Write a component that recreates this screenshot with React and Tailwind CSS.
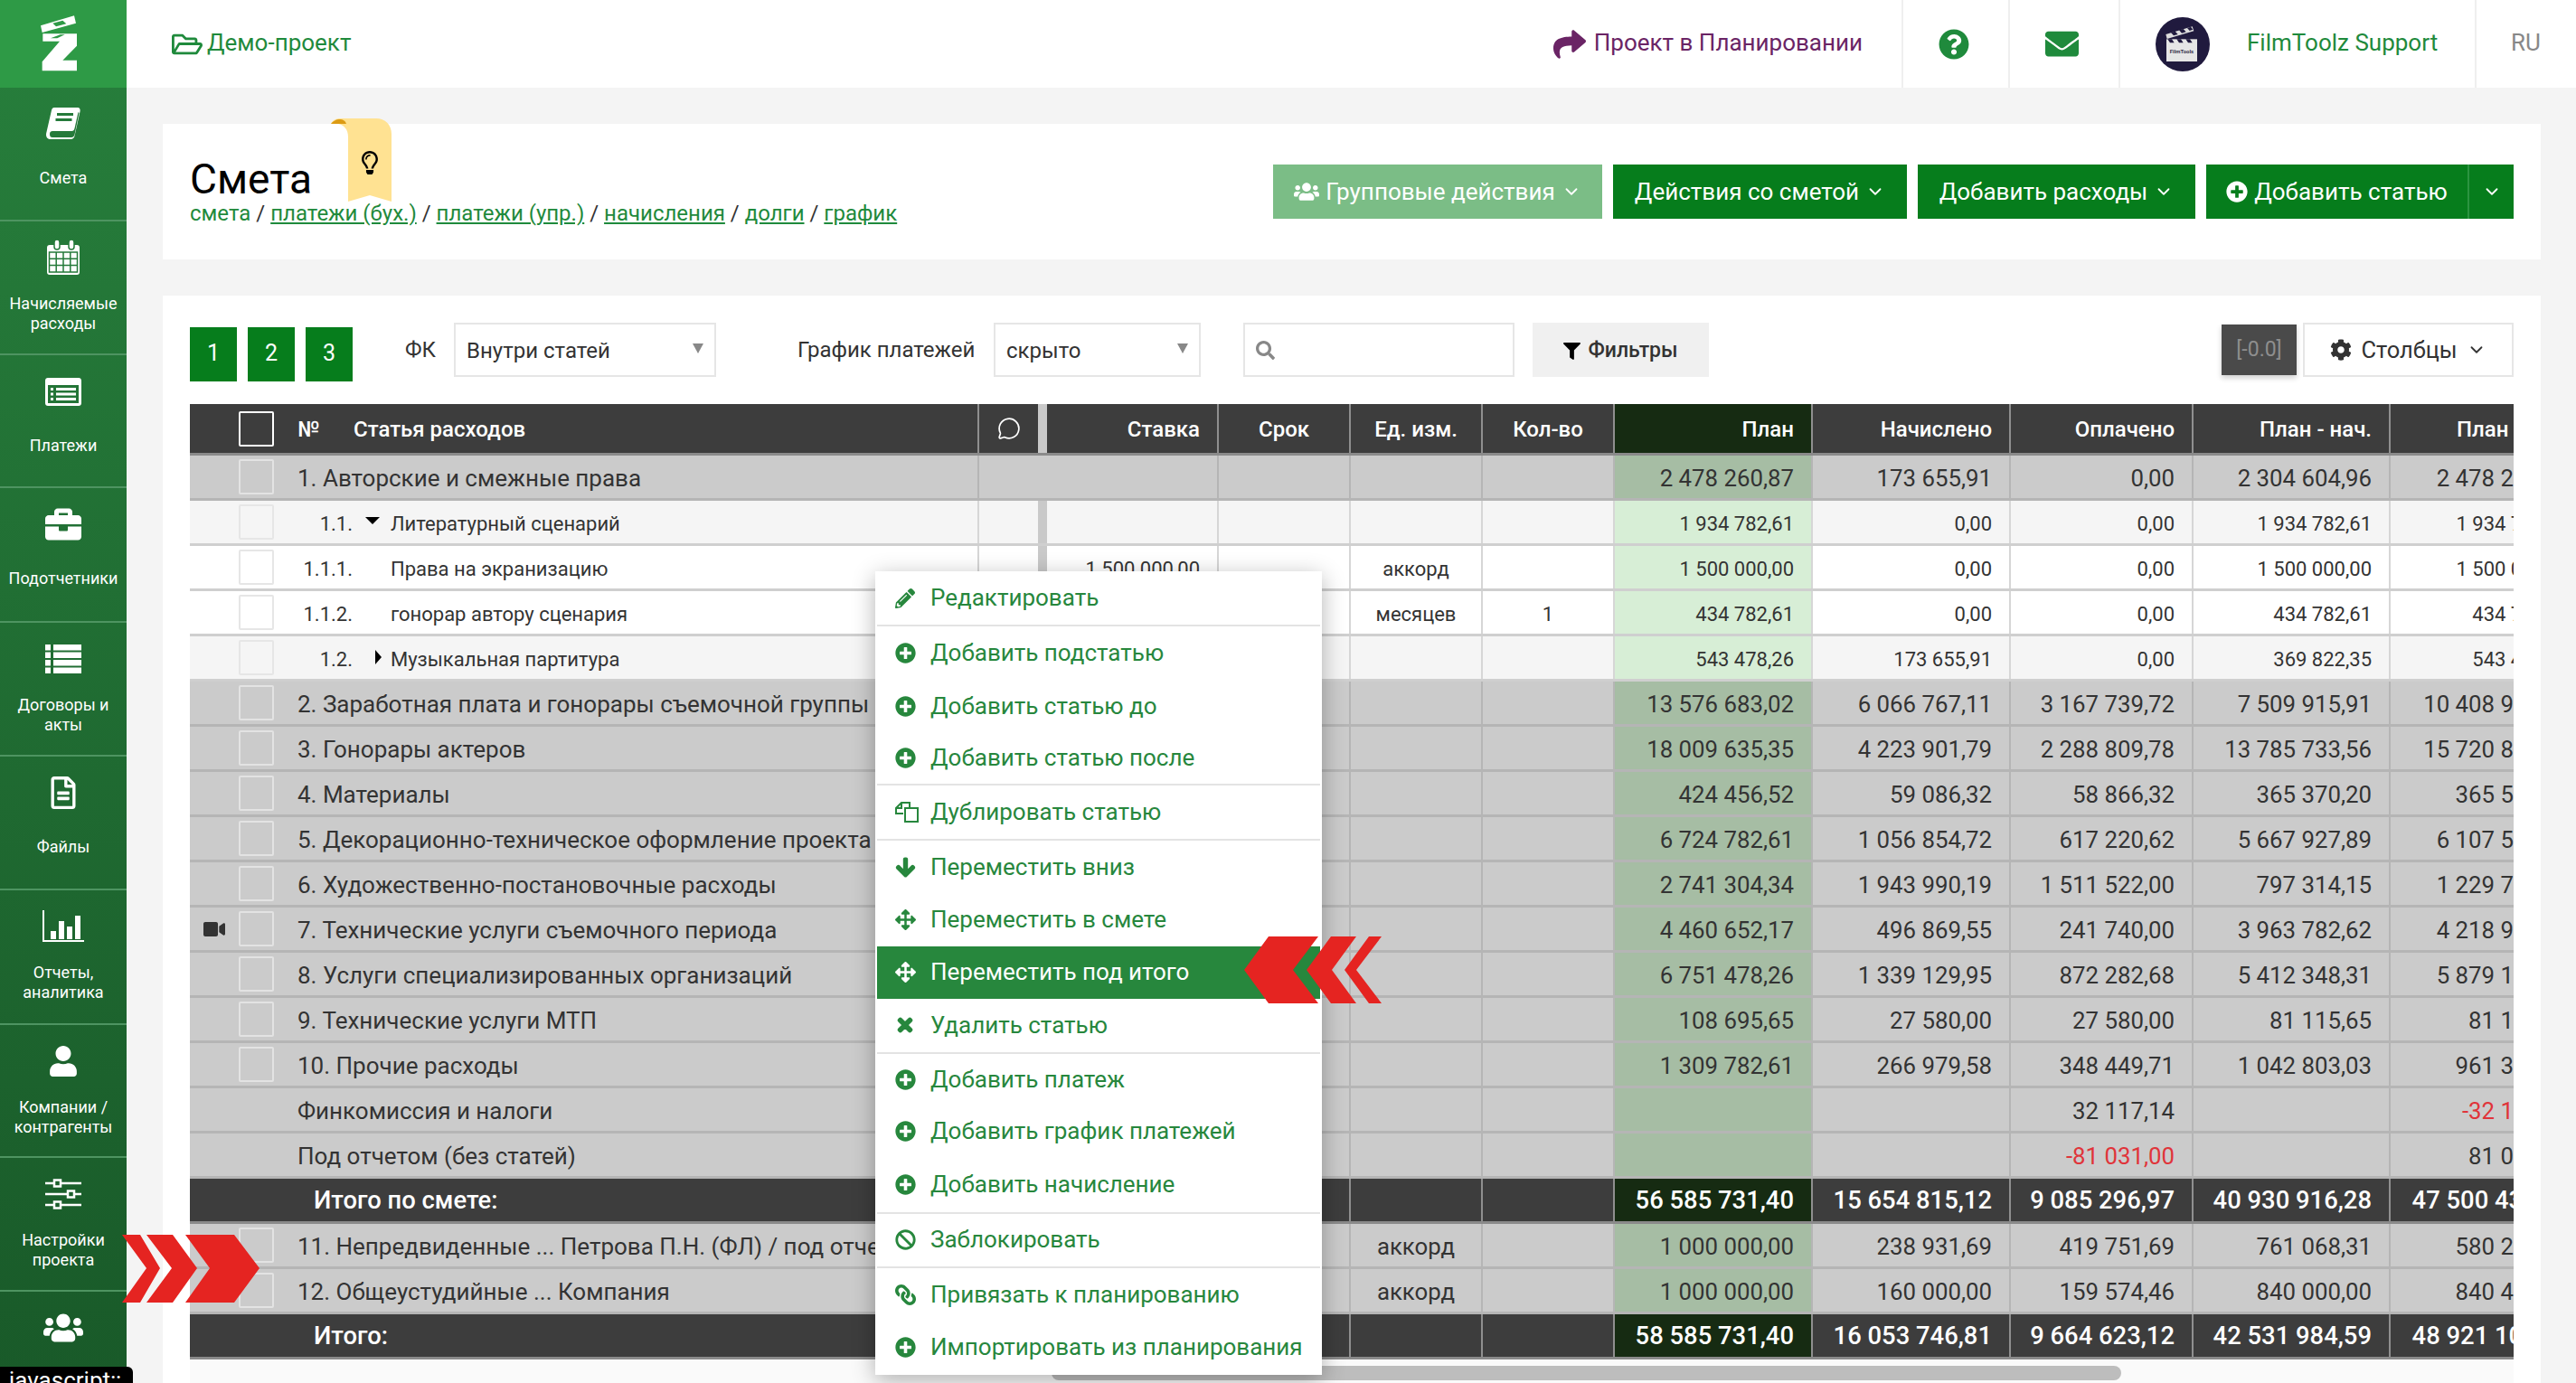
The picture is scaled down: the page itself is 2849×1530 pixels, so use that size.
import {
  FaArrowDown, FaArrowsAlt, FaBan, FaBriefcase, FaCog, FaEnvelope, FaFilter, FaLink, FaPencilAlt,
  FaPlusCircle, FaQuestionCircle, FaRegFileAlt, FaRegFolderOpen, FaRegLightbulb,
  FaSearch, FaShare, FaTimes, FaUser, FaUsers, FaVideo,
} from 'react-icons/fa'
import { ChevronDown, MessageCircle } from 'lucide-react'

function BookIcon() {
  return (
    <svg viewBox="0 0 38 36" className="h-[36px] w-[38px]" fill="#fff">
      <path d="M9 0h26c2 0 3 2 2.600 4l-6 27c-.5 2.500-2 4-4.600 4H5c-3 0-5-2-5-5 0-1 .2-2 .5-3L6 3c.4-2 1.500-3 3-3z" />
      <path d="M4 29c0-2 1.500-3 3-3h21.500c1.500 0 2.500-1 3-3l4-18 1 1-5 24c-.4 1.500-1.500 3-3.500 3H7c-2 0-3-1-3-4z" fill="#257a3a" />
      <rect x="12" y="6" width="18" height="3" fill="#257a3a" />
      <rect x="10.500" y="12" width="18" height="3" fill="#257a3a" />
    </svg>
  )
}

function CalendarIcon() {
  return (
    <svg viewBox="0 0 38 40" className="h-[40px] w-[38px]" fill="none">
      <rect x="1" y="6" width="36" height="33" rx="3" fill="#fff" />
      <rect x="9" y="0" width="6" height="11" rx="3" fill="#fff" stroke="#257a3a" strokeWidth="1.500" />
      <rect x="25" y="0" width="6" height="11" rx="3" fill="#fff" stroke="#257a3a" strokeWidth="1.500" />
      <path d="M3.500 14h31v22h-31zM3.500 21.300h31M3.500 28.600h31M11.200 14v22M19 14v22M26.800 14v22" stroke="#257a3a" strokeWidth="1.500" />
    </svg>
  )
}

function ListAltIcon() {
  return (
    <svg viewBox="0 0 40 31" className="h-[31px] w-[40px]" fill="#fff">
      <path fillRule="evenodd" d="M3 0h34c1.700 0 3 1.300 3 3v25c0 1.700-1.300 3-3 3H3c-1.700 0-3-1.300-3-3V3c0-1.700 1.300-3 3-3zM3 8v20h34V8z" />
      <rect x="6" y="11" width="3" height="3" />
      <rect x="6" y="16.500" width="3" height="3" />
      <rect x="6" y="22" width="3" height="3" />
      <rect x="12" y="11" width="22" height="3" />
      <rect x="12" y="16.500" width="22" height="3" />
      <rect x="12" y="22" width="22" height="3" />
    </svg>
  )
}

function ListIcon() {
  return (
    <svg viewBox="0 0 40 32" className="h-[32px] w-[40px]" fill="#fff">
      {[0, 8.500, 17, 25.500].map((y) => (
        <g key={y}>
          <rect x="0" y={y} width="6" height="6.500" />
          <rect x="9" y={y} width="31" height="6.500" />
        </g>
      ))}
    </svg>
  )
}

function ChartIcon() {
  return (
    <svg viewBox="0 0 46 36" className="h-[36px] w-[46px]" fill="#fff">
      <path d="M0 0h2v33h44v2H0z" />
      <rect x="9" y="23" width="6" height="9" />
      <rect x="18" y="12" width="6" height="20" />
      <rect x="27" y="18" width="6" height="14" />
      <rect x="36" y="6" width="6" height="26" />
    </svg>
  )
}

function SlidersIcon() {
  return (
    <svg viewBox="0 0 40 34" className="h-[34px] w-[40px]" fill="none" stroke="#fff" strokeWidth="2.500">
      <path d="M0 5h9M18 5h22M0 17h24M33 17h7M0 29h9M18 29h22" />
      <rect x="10" y="1.500" width="7" height="7" />
      <rect x="25" y="13.500" width="7" height="7" />
      <rect x="10" y="25.500" width="7" height="7" />
    </svg>
  )
}

function CopyIcon() {
  return (
    <svg viewBox="0 0 26 24" className="h-[24px] w-[26px]" fill="none" stroke="currentColor" strokeWidth="2">
      <path d="M9 14H1V8l6-6h9v6" />
      <path d="M7 2v6H1" />
      <path d="M11 8h14v15H11z" />
    </svg>
  )
}

function Logo() {
  return (
    <svg viewBox="0 0 240 240" className="absolute left-[30px] top-[5px] h-[80px] w-[80px]" fill="#fff">
      <path d="M45 70 156 37l6 25L50 93z" />
      <path d="M85 62l33-9 12 11-34 9z" fill="#2e9a46" />
      <path d="M52 97h113v40l-47 48h47v35H50v-30l58-68H52z" />
      <path d="M78 112l32-12h15l-25 12z" fill="#2e9a46" />
    </svg>
  )
}

function Avatar() {
  return (
    <svg viewBox="42 35 180 180" className="h-[60px] w-[60px]">
      <circle cx="132" cy="125" r="90" fill="#201a3e" />
      <path d="M76 92 164 66l5 15-89 26z" fill="#dedede" />
      <path d="M93 86l14-4 9 10-14 4zM120 78l14-4 9 10-14 4zM147 71l12-4 7 9-11 4z" fill="#201a3e" />
      <rect x="78" y="108" width="102" height="74" fill="#e6e6e6" />
      <path d="M82 108h14l8 12H90zM112 108h14l8 12h-14zM142 108h14l8 12h-14z" fill="#201a3e" />
      <text x="129" y="156" textAnchor="middle" fontSize="18" fontWeight="700" fill="#33304a">FilmTools</text>
    </svg>
  )
}

const navItems = [
  { label: ['Смета'], icon: <BookIcon />, h: 'h-[148px]' },
  { label: ['Начисляемые', 'расходы'], icon: <CalendarIcon />, h: 'h-[148px]' },
  { label: ['Платежи'], icon: <ListAltIcon />, h: 'h-[147px]' },
  { label: ['Подотчетники'], icon: <FaBriefcase size={40} />, h: 'h-[149px]' },
  { label: ['Договоры и', 'акты'], icon: <ListIcon />, h: 'h-[148px]' },
  { label: ['Файлы'], icon: <FaRegFileAlt size={36} />, h: 'h-[148px]' },
  { label: ['Отчеты,', 'аналитика'], icon: <ChartIcon />, h: 'h-[149px]' },
  { label: ['Компании /', 'контрагенты'], icon: <FaUser size={34} />, h: 'h-[147px]' },
  { label: ['Настройки', 'проекта'], icon: <SlidersIcon />, h: 'h-[148px]' },
  { label: [], icon: <FaUsers size={44} />, h: 'h-[101px]' },
]

function Sidebar() {
  return (
    <aside className="absolute left-0 top-0 z-10 h-[1530px] w-[140px] overflow-hidden bg-gradient-to-b from-[#277f3c] to-[#195a29]">
      <div className="relative h-[97px] bg-[#2e9a46]">
        <Logo />
      </div>
      {navItems.map((item, i) => (
        <div key={i} className={`${item.h} border-b-[2px] border-[#4e9461] pt-[20px] text-white last:border-b-0`}>
          <div className="flex h-[40px] items-center justify-center">{item.icon}</div>
          <div className={`text-center text-[18px] leading-[22px] ${item.label.length > 1 ? 'mt-[20px]' : 'mt-[29px]'}`}>
            {item.label.map((l) => (
              <div key={l}>{l}</div>
            ))}
          </div>
        </div>
      ))}
    </aside>
  )
}

function TopBar() {
  return (
    <header className="absolute left-[140px] right-0 top-0 flex h-[97px] items-center bg-white">
      <div className="ml-[50px] flex items-center gap-[5px] text-[26px] text-[#1f8a3c]">
        <FaRegFolderOpen size={34} />
        <span className="pb-[3px]">Демо-проект</span>
      </div>
      <div className="ml-auto flex h-full items-center">
        <div className="flex items-center gap-[9px] pr-[43px] text-[26px] text-[#6a2465]">
          <FaShare size={36} />
          <span className="pb-[3px]">Проект в Планировании</span>
        </div>
        <div className="flex h-full w-[118px] items-center justify-center border-l-[2px] border-[#efefef] pr-[5px] text-[#1f8a3c]">
          <FaQuestionCircle size={34} />
        </div>
        <div className="flex h-full w-[122px] items-center justify-center border-l-[2px] border-[#efefef] pr-[6px] text-[#1f8a3c]">
          <FaEnvelope size={37} />
        </div>
        <div className="flex h-full w-[394px] items-center gap-[41px] border-l-[2px] border-[#efefef] pl-[39px] text-[26px] text-[#1f8a3c]">
          <Avatar />
          <span className="pb-[3px]">FilmToolz Support</span>
        </div>
        <div className="flex h-full w-[112px] items-center border-l-[2px] border-[#efefef] pb-[3px] pl-[38px] text-[26px] text-[#888]">RU</div>
      </div>
    </header>
  )
}

function ActionButton({ className, children }) {
  return (
    <button type="button" className={`flex h-[60px] items-center justify-center gap-[7px] text-[26px] text-white ${className}`}>
      {children}
    </button>
  )
}

function TitleCard() {
  return (
    <section className="absolute left-[180px] top-[137px] h-[150px] w-[2630px] bg-white">
      <svg viewBox="0 0 67 92" className="absolute left-[186px] top-[-6px] h-[92px] w-[67px]">
        <path d="M0 6C2 2 6 0 10 0h40c10 0 17 7 17 17v75l-24-7-24 7V20C19 12 14 7 8 6z" fill="#ffe292" />
        <path d="M0 6c2-3 6-5 9-5 5 0 7 2 8 5z" fill="#dc9b14" />
      </svg>
      <FaRegLightbulb size={26} className="absolute left-[216px] top-[30px]" />
      <h1 className="absolute left-[30px] top-[31px] text-[46px] leading-[60px] text-black">Смета</h1>
      <div className="absolute left-[30px] top-[84px] text-[24px] leading-[30px] text-[#333]">
        <span className="text-[#1f8a3c]">смета</span> / <a className="text-[#1f8a3c] underline">платежи (бух.)</a> /{' '}
        <a className="text-[#1f8a3c] underline">платежи (упр.)</a> / <a className="text-[#1f8a3c] underline">начисления</a> /{' '}
        <a className="text-[#1f8a3c] underline">долги</a> / <a className="text-[#1f8a3c] underline">график</a>
      </div>
      <div className="absolute right-[30px] top-[45px] flex gap-[12px]">
        <ActionButton className="w-[364px] bg-[#7bbd86]">
          <FaUsers size={28} />
          <span>Групповые действия</span>
          <ChevronDown size={22} />
        </ActionButton>
        <ActionButton className="w-[325px] bg-[#067d1c]">
          <span>Действия со сметой</span>
          <ChevronDown size={22} />
        </ActionButton>
        <ActionButton className="w-[307px] bg-[#067d1c]">
          <span>Добавить расходы</span>
          <ChevronDown size={22} />
        </ActionButton>
        <div className="flex w-[340px] bg-[#067d1c]">
          <ActionButton className="w-[291px] border-r-[2px] border-[#2b9440]">
            <FaPlusCircle size={24} />
            <span>Добавить статью</span>
          </ActionButton>
          <ActionButton className="flex-1">
            <ChevronDown size={22} />
          </ActionButton>
        </div>
      </div>
    </section>
  )
}

function SelectBox({ className, children }) {
  return (
    <div className={`relative flex h-[60px] items-center border-[2px] border-[#e6e6e6] pl-[12px] text-[24px] text-[#333] ${className}`}>
      <span className="pt-[1px]">{children}</span>
      <span className="absolute right-[12px] top-[21px] h-0 w-0 border-x-[6px] border-t-[11px] border-x-transparent border-t-[#888]" />
    </div>
  )
}

function Toolbar() {
  return (
    <div className="absolute left-[210px] top-[357px] flex h-[60px] w-[2570px] items-center text-[24px] text-[#333]">
      <div className="mt-[10px] flex gap-[12px]">
        {['1', '2', '3'].map((n) => (
          <div key={n} className="flex h-[60px] w-[52px] items-center justify-center bg-[#067d1c] pb-[2px] text-[25px] text-white">
            {n}
          </div>
        ))}
      </div>
      <span className="ml-[58px] w-[54px]">ФК</span>
      <SelectBox className="w-[290px]">Внутри статей</SelectBox>
      <span className="ml-[90px] w-[217px]">График платежей</span>
      <SelectBox className="w-[229px]">скрыто</SelectBox>
      <div className="ml-[47px] flex h-[60px] w-[300px] items-center border-[2px] border-[#e6e6e6] pl-[12px] text-[#888]">
        <FaSearch size={21} />
      </div>
      <button type="button" className="ml-[20px] flex h-[60px] w-[195px] items-center justify-center gap-[8px] bg-[#f0f0f0] pt-[2px] text-[23px] font-medium text-[#333]">
        <FaFilter size={19} className="text-black" />
        Фильтры
      </button>
      <div className="ml-auto flex h-[56px] w-[83px] items-center justify-center bg-[#4a4a4a] text-[23px] text-[#8e8e8e] shadow-[0_3px_6px_rgba(0,0,0,.2)]">[-0.0]</div>
      <div className="ml-[7px] flex h-[60px] w-[233px] items-center justify-center gap-[10px] border-[2px] border-[#e6e6e6] text-[25.500px] text-[#333]">
        <FaCog size={24} />
        Столбцы
        <ChevronDown size={22} />
      </div>
    </div>
  )
}

// widths of the columns right of the comment gutter
const colW = ['w-[190px]', 'w-[146px]', 'w-[146px]', 'w-[146px]', 'w-[219px]', 'w-[219px]', 'w-[202px]', 'w-[218px]', 'w-[218px]']

const rows = [
  { k: 'group', cb: 1, title: '1. Авторские и смежные права', plan: ['2 478 260,87', '173 655,91', '0,00', '2 304 604,96', '2 478 260,87'] },
  { k: 'sub', cb: 1, no: '1.1.', arrow: 'down', title: 'Литературный сценарий', plan: ['1 934 782,61', '0,00', '0,00', '1 934 782,61', '1 934 782,61'] },
  { k: 'leaf', cb: 1, no: '1.1.1.', title: 'Права на экранизацию', rate: '1 500 000,00', unit: 'аккорд', plan: ['1 500 000,00', '0,00', '0,00', '1 500 000,00', '1 500 000,00'] },
  { k: 'leaf', cb: 1, no: '1.1.2.', title: 'гонорар автору сценария', unit: 'месяцев', qty: '1', plan: ['434 782,61', '0,00', '0,00', '434 782,61', '434 782,61'] },
  { k: 'sub', cb: 1, no: '1.2.', arrow: 'right', title: 'Музыкальная партитура', plan: ['543 478,26', '173 655,91', '0,00', '369 822,35', '543 478,26'] },
  { k: 'group', cb: 1, title: '2. Заработная плата и гонорары съемочной группы', plan: ['13 576 683,02', '6 066 767,11', '3 167 739,72', '7 509 915,91', '10 408 906,74'] },
  { k: 'group', cb: 1, title: '3. Гонорары актеров', plan: ['18 009 635,35', '4 223 901,79', '2 288 809,78', '13 785 733,56', '15 720 825,57'] },
  { k: 'group', cb: 1, title: '4. Материалы', plan: ['424 456,52', '59 086,32', '58 866,32', '365 370,20', '365 590,20'] },
  { k: 'group', cb: 1, title: '5. Декорационно-техническое оформление проекта', plan: ['6 724 782,61', '1 056 854,72', '617 220,62', '5 667 927,89', '6 107 561,99'] },
  { k: 'group', cb: 1, title: '6. Художественно-постановочные расходы', plan: ['2 741 304,34', '1 943 990,19', '1 511 522,00', '797 314,15', '1 229 782,34'] },
  { k: 'group', cb: 1, cam: 1, title: '7. Технические услуги съемочного периода', plan: ['4 460 652,17', '496 869,55', '241 740,00', '3 963 782,62', '4 218 912,17'] },
  { k: 'group', cb: 1, title: '8. Услуги специализированных организаций', plan: ['6 751 478,26', '1 339 129,95', '872 282,68', '5 412 348,31', '5 879 195,58'] },
  { k: 'group', cb: 1, title: '9. Технические услуги МТП', plan: ['108 695,65', '27 580,00', '27 580,00', '81 115,65', '81 115,65'] },
  { k: 'group', cb: 1, title: '10. Прочие расходы', plan: ['1 309 782,61', '266 979,58', '348 449,71', '1 042 803,03', '961 332,90'] },
  { k: 'group', title: 'Финкомиссия и налоги', plan: ['', '', '32 117,14', '', '-32 117,14'], red: [4] },
  { k: 'group', title: 'Под отчетом (без статей)', plan: ['', '', '-81 031,00', '', '81 031,00'], red: [2] },
  { k: 'total', title: 'Итого по смете:', plan: ['56 585 731,40', '15 654 815,12', '9 085 296,97', '40 930 916,28', '47 500 434,43'] },
  { k: 'group', cb: 1, title: '11. Непредвиденные ... Петрова П.Н. (ФЛ) / под отчет', unit: 'аккорд', plan: ['1 000 000,00', '238 931,69', '419 751,69', '761 068,31', '580 248,31'] },
  { k: 'group', cb: 1, title: '12. Общеустудийные ... Компания', unit: 'аккорд', plan: ['1 000 000,00', '160 000,00', '159 574,46', '840 000,00', '840 425,54'] },
  { k: 'total', title: 'Итого:', plan: ['58 585 731,40', '16 053 746,81', '9 664 623,12', '42 531 984,59', '48 921 108,28'] },
]

const rowStyle = {
  group: { row: 'bg-[#cbcbcb] border-[#b5b5b5] text-[#333]', cell: 'border-[#b5b5b5]', plan: 'bg-[#a6bda4]', num: 'text-[25.800px]', title: 'text-[26px]', check: 'border-[#e3e3e3]', bar: 'bg-[#cbcbcb]' },
  sub: { row: 'bg-[#f5f5f5] border-[#cfcfcf] text-[#333]', cell: 'border-[#d6d6d6]', plan: 'bg-[#d7eed6]', num: 'text-[22px]', title: 'text-[22px]', check: 'border-[#e6e6e6]', bar: 'bg-[#c9c9c9]' },
  leaf: { row: 'bg-white border-[#cfcfcf] text-[#333]', cell: 'border-[#d6d6d6]', plan: 'bg-[#d7eed6]', num: 'text-[22px]', title: 'text-[22px]', check: 'border-[#e6e6e6]', bar: 'bg-[#c9c9c9]' },
  total: { row: 'bg-[#3d3d3d] border-[#8a8a8a] text-white', cell: 'border-[#8f8f8f]', plan: 'bg-[#162b12]', num: 'text-[27.400px] font-medium', title: 'text-[27.400px] font-medium', check: '', bar: 'bg-[#3d3d3d]' },
}

function Row({ row }) {
  const s = rowStyle[row.k]
  return (
    <div className={`flex h-[50px] border-b-[3px] ${s.row}`}>
      <div className={`relative flex w-[873px] shrink-0 items-center overflow-hidden border-r-[2px] pt-[3px] ${s.cell} ${s.title}`}>
        {row.cam && <FaVideo size={24} className="absolute left-[15px] top-[12px] text-[#333]" />}
        {row.cb && <div className={`absolute left-[54px] top-[4px] h-[39px] w-[39px] rounded-[2px] border-[2px] ${s.check}`} />}
        {row.no && <span className="absolute right-[691px]">{row.no}</span>}
        {row.arrow === 'down' && <span className="absolute left-[194px] top-[18px] h-0 w-0 border-x-[8px] border-t-[8px] border-x-transparent border-t-black" />}
        {row.arrow === 'right' && <span className="absolute left-[205px] top-[15px] h-0 w-0 border-y-[8px] border-l-[7px] border-y-transparent border-l-black" />}
        <span className={row.no ? 'ml-[222px]' : row.k === 'total' ? 'ml-[137px]' : 'ml-[119px]'}>{row.title}</span>
      </div>
      <div className="w-[65px] shrink-0" />
      <div className={`w-[10px] shrink-0 ${s.bar}`} />
      <div className={`flex shrink-0 items-center justify-end border-r-[2px] pr-[19px] pt-[3px] ${colW[0]} ${s.cell} ${s.num}`}>{row.rate}</div>
      <div className={`flex shrink-0 items-center justify-center border-r-[2px] pt-[3px] ${colW[1]} ${s.cell} ${s.num}`} />
      <div className={`flex shrink-0 items-center justify-center border-r-[2px] pt-[3px] ${colW[2]} ${s.cell} ${s.num}`}>{row.unit}</div>
      <div className={`flex shrink-0 items-center justify-center border-r-[2px] pt-[3px] ${colW[3]} ${s.cell} ${s.num}`}>{row.qty}</div>
      {row.plan.map((v, i) => (
        <div
          key={i}
          className={`flex shrink-0 items-center justify-end pr-[19px] pt-[3px] ${colW[i + 4]} ${s.num} ${i === 0 ? s.plan : ''} ${i < 4 ? `border-r-[2px] ${s.cell}` : ''} ${row.red?.includes(i) ? 'text-[#e0343a]' : ''}`}
        >
          {v}
        </div>
      ))}
    </div>
  )
}

function HeadCell({ className, children }) {
  return <div className={`flex shrink-0 items-center border-r-[2px] border-[#8f8f8f] pt-[2px] text-[24px] ${className}`}>{children}</div>
}

function BudgetTable() {
  return (
    <div className="absolute left-[210px] top-[447px] w-[2570px] overflow-hidden">
      <div className="w-[3000px]">
        <div className="flex h-[57px] border-b-[3px] border-[#8a8a8a] bg-[#3d3d3d] font-medium text-white">
          <div className="relative flex w-[873px] shrink-0 items-center border-r-[2px] border-[#8f8f8f] pt-[2px] text-[24px]">
            <div className="absolute left-[54px] top-[8px] h-[39px] w-[39px] rounded-[2px] border-[2px] border-white" />
            <span className="ml-[119px] w-[62px]">№</span>
            <span>Статья расходов</span>
          </div>
          <div className="flex w-[65px] shrink-0 items-center justify-center">
            <MessageCircle size={26} strokeWidth={1.6} />
          </div>
          <div className="w-[10px] shrink-0 bg-[#c9c9c9]" />
          <HeadCell className={`${colW[0]} justify-end pr-[19px]`}>Ставка</HeadCell>
          <HeadCell className={`${colW[1]} justify-center`}>Срок</HeadCell>
          <HeadCell className={`${colW[2]} justify-center`}>Ед. изм.</HeadCell>
          <HeadCell className={`${colW[3]} justify-center`}>Кол-во</HeadCell>
          <HeadCell className={`${colW[4]} justify-end bg-[#162b12] pr-[19px]`}>План</HeadCell>
          <HeadCell className={`${colW[5]} justify-end pr-[19px]`}>Начислено</HeadCell>
          <HeadCell className={`${colW[6]} justify-end pr-[19px]`}>Оплачено</HeadCell>
          <HeadCell className={`${colW[7]} justify-end pr-[19px]`}>План - нач.</HeadCell>
          <div className={`flex shrink-0 items-center pt-[2px] text-[24px] ${colW[8]} pl-[73px]`}>План</div>
        </div>
        {rows.map((row) => (
          <Row key={row.title} row={row} />
        ))}
      </div>
    </div>
  )
}

const menu = [
  { icon: <FaPencilAlt size={22} />, label: 'Редактировать', y: 'h-[60px]', line: true },
  { icon: <FaPlusCircle size={23} />, label: 'Добавить подстатью', y: 'h-[60px]' },
  { icon: <FaPlusCircle size={23} />, label: 'Добавить статью до', y: 'h-[58px]' },
  { icon: <FaPlusCircle size={23} />, label: 'Добавить статью после', y: 'h-[58px]', line: true },
  { icon: <CopyIcon />, label: 'Дублировать статью', y: 'h-[61px]', line: true },
  { icon: <FaArrowDown size={23} stroke="currentColor" strokeWidth={40} />, label: 'Переместить вниз', y: 'h-[59px]' },
  { icon: <FaArrowsAlt size={23} />, label: 'Переместить в смете', y: 'h-[58px]' },
  { icon: <FaArrowsAlt size={23} />, label: 'Переместить под итого', y: 'h-[58px]', active: true },
  { icon: <FaTimes size={22} stroke="currentColor" strokeWidth={40} />, label: 'Удалить статью', y: 'h-[61px]', line: true },
  { icon: <FaPlusCircle size={23} />, label: 'Добавить платеж', y: 'h-[57px]' },
  { icon: <FaPlusCircle size={23} />, label: 'Добавить график платежей', y: 'h-[58px]' },
  { icon: <FaPlusCircle size={23} />, label: 'Добавить начисление', y: 'h-[62px]', line: true },
  { icon: <FaBan size={23} />, label: 'Заблокировать', y: 'h-[60px]', line: true },
  { icon: <FaLink size={23} className="scale-x-[-1]" />, label: 'Привязать к планированию', y: 'h-[59px]' },
  { icon: <FaPlusCircle size={23} />, label: 'Импортировать из планирования', y: 'h-[58px]' },
]

function ContextMenu() {
  return (
    <div className="absolute left-[968px] top-[632px] z-20 h-[889px] w-[494px] bg-white px-[2px] pt-[1px] shadow-[0_6px_24px_rgba(0,0,0,.3)]">
      {menu.map((m) => (
        <div
          key={m.label}
          className={`flex items-center pb-[1px] pl-[20px] text-[26px] ${m.y} ${m.active ? 'bg-[#27873d] text-white' : 'text-[#27873d]'} ${m.line ? 'border-b-[2px] border-[#e3e3e3]' : ''}`}
        >
          <span className="flex w-[39px] shrink-0">{m.icon}</span>
          {m.label}
        </div>
      ))}
    </div>
  )
}

function RedArrows() {
  return (
    <svg className="absolute left-0 top-0 z-30 h-[1530px] w-[2849px]" viewBox="0 0 2849 1530" fill="#e52421" pointerEvents="none">
      <path d="M1376 1073l27-37h55l-28 37 28 37h-55z" />
      <path d="M1445 1073l27-37h28l-27 37 27 37h-28z" />
      <path d="M1487 1073l27-37h14l-28 37 28 37h-14z" />
      <path d="M135 1366h20l22 37-22 38h-20l27-38z" />
      <path d="M162 1366h29l27 37-27 38h-29l28-38z" />
      <path d="M205 1366h54l28 37-28 38h-54l27-38z" />
    </svg>
  )
}

export default function App() {
  return (
    <div className="relative h-[1530px] w-[2849px] overflow-hidden bg-[#f4f4f4] [font-family:Roboto,sans-serif]">
      <Sidebar />
      <TopBar />
      <TitleCard />
      <section className="absolute left-[180px] top-[327px] h-[1203px] w-[2630px] bg-white" />
      <Toolbar />
      <BudgetTable />
      <div className="absolute left-[210px] top-[1505px] h-[25px] w-[2570px] bg-[#fafafa]">
        <div className="absolute left-[953px] top-[6px] h-[16px] w-[1183px] rounded-full bg-[#bdbdbd]" />
      </div>
      <ContextMenu />
      <RedArrows />
      <div className="absolute bottom-0 left-0 z-40 h-[18px] w-[147px] overflow-hidden rounded-tr-[6px] bg-black pl-[10px] text-[26px] leading-[30px] text-white">javascript:;</div>
    </div>
  )
}
